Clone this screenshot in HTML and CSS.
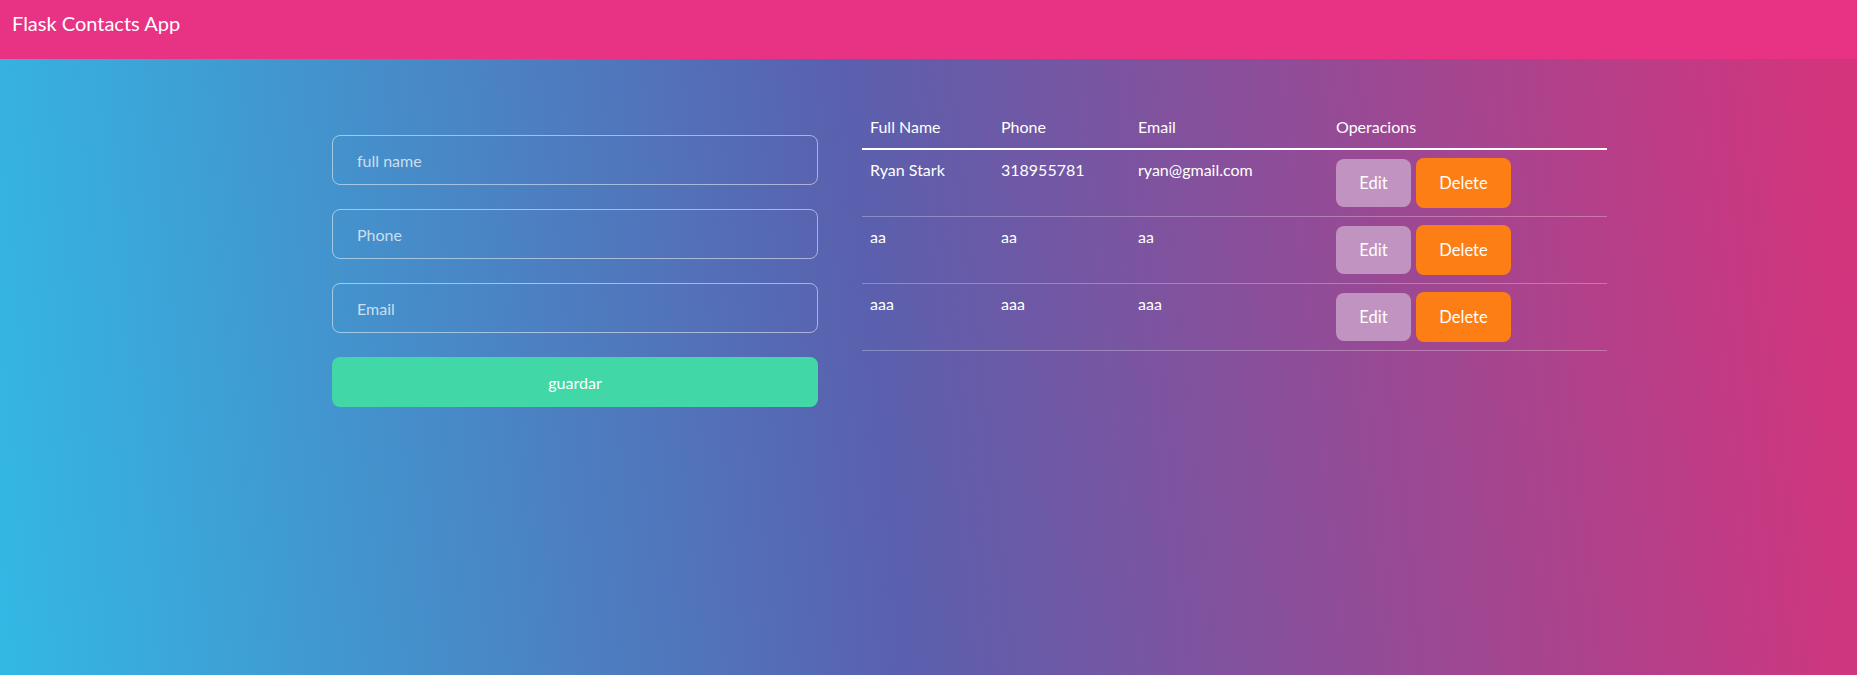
FILE: index.html
```html
<!DOCTYPE html>
<html lang="en">
<head>
<meta charset="utf-8">
<title>Flask Contacts App</title>
<link rel="stylesheet" href="styles.css">
</head>
<body>
<header class="navbar">
  <span class="brand">Flask Contacts App</span>
</header>
<main class="content">
  <form class="contact-form">
    <input class="field" type="text" placeholder="full name">
    <input class="field" type="text" placeholder="Phone">
    <input class="field" type="text" placeholder="Email">
    <button class="save" type="button">guardar</button>
  </form>
  <table class="contacts">
    <thead>
      <tr>
        <th class="c-name">Full Name</th>
        <th class="c-phone">Phone</th>
        <th class="c-email">Email</th>
        <th class="c-ops">Operacions</th>
      </tr>
    </thead>
    <tbody>
      <tr>
        <td>Ryan Stark</td>
        <td>318955781</td>
        <td>ryan@gmail.com</td>
        <td><div class="ops"><a class="btn edit">Edit</a><button class="btn delete" type="button">Delete</button></div></td>
      </tr>
      <tr>
        <td>aa</td>
        <td>aa</td>
        <td>aa</td>
        <td><div class="ops"><a class="btn edit">Edit</a><button class="btn delete" type="button">Delete</button></div></td>
      </tr>
      <tr>
        <td>aaa</td>
        <td>aaa</td>
        <td>aaa</td>
        <td><div class="ops"><a class="btn edit">Edit</a><button class="btn delete" type="button">Delete</button></div></td>
      </tr>
    </tbody>
  </table>
</main>
</body>
</html>
```

FILE: styles.css
```css
html, body {
  margin: 0;
  padding: 0;
  height: 100%;
}

body {
  font-family: "Segoe UI", Lato, "Open Sans", sans-serif;
  font-size: 16px;
  line-height: 24px;
  color: #fff;
  background: linear-gradient(84deg, #33b8e4 0%, #5a60ae 47%, #d7337b 100%);
  min-height: 675px;
}

.navbar {
  height: 59px;
  background: #e83283;
  padding: 8px 12px 0;
  box-sizing: border-box;
}

.brand {
  font-size: 20px;
  line-height: 30px;
  color: #fff;
}

.content {
  display: flex;
  align-items: flex-start;
  gap: 44px;
  padding-left: 332px;
}

.contact-form {
  width: 486px;
  margin-top: 76px;
  display: flex;
  flex-direction: column;
  gap: 24px;
}

.field {
  height: 50px;
  box-sizing: border-box;
  border: 1px solid rgba(255, 255, 255, 0.5);
  border-radius: 8px;
  background: transparent;
  padding: 0 24px;
  font-family: inherit;
  font-size: 16px;
  color: #fff;
  outline: none;
}

.field::placeholder {
  color: rgba(255, 255, 255, 0.72);
}

.save {
  height: 50px;
  border: none;
  border-radius: 8px;
  background: #41d7a7;
  color: #fff;
  font-family: inherit;
  font-size: 16px;
}

.contacts {
  width: 745px;
  margin-top: 47px;
  border-collapse: collapse;
  text-align: left;
}

.contacts th {
  font-weight: normal;
  padding: 9px 8px;
  border-bottom: 2px solid #fff;
}

.c-name { width: 115px; }
.c-phone { width: 121px; }
.c-email { width: 182px; }

.contacts td {
  padding: 8px 8px 7px;
  vertical-align: top;
  border-bottom: 1px solid rgba(255, 255, 255, 0.28);
  height: 51px;
}

.ops {
  display: flex;
  align-items: center;
  gap: 5px;
}

.btn {
  display: inline-flex;
  align-items: center;
  justify-content: center;
  border-radius: 8px;
  font-family: inherit;
  font-size: 16.5px;
  color: #fff;
  border: none;
}

.edit {
  width: 75px;
  height: 48px;
  background: #c093c1;
}

.delete {
  width: 95px;
  height: 50px;
  background: #fd7e14;
}
```
